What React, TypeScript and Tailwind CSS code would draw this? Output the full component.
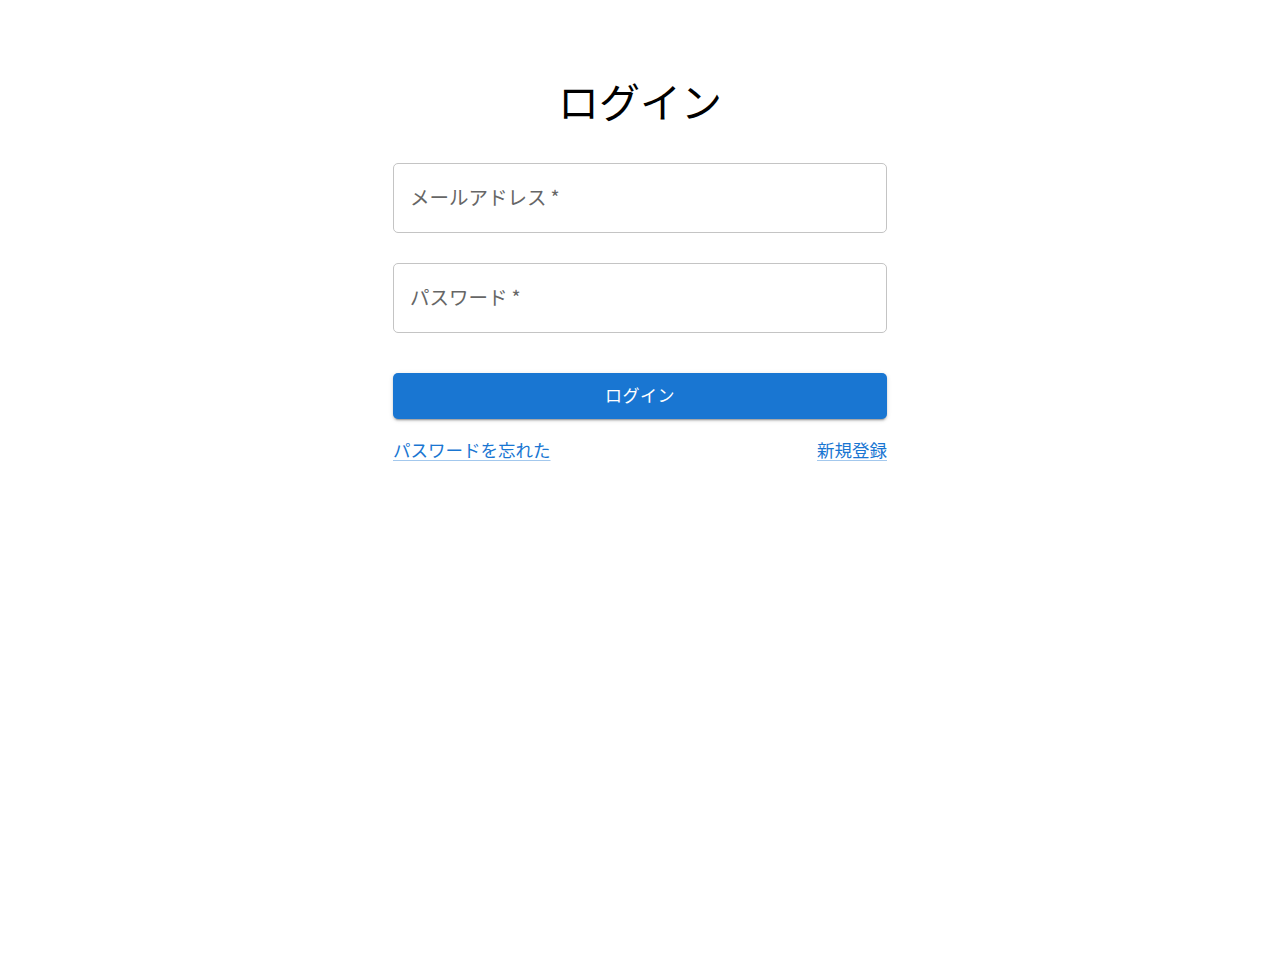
export default function App() {
  return (
    <div
      className="min-h-screen bg-white flex flex-col items-center pt-[75px]"
      style={{ fontFamily: '"Noto Sans CJK JP", "Noto Sans", sans-serif' }}
    >
      <h1 className="text-[41px] leading-[51px] font-normal text-black">ログイン</h1>

      <form className="w-[494px] mt-[37px] flex flex-col" onSubmit={(e) => e.preventDefault()}>
        {/* email */}
        <div className="h-[70px] border border-[#c4c4c4] rounded-[5px] flex items-center px-[16px] pb-[3px]">
          <span className="text-[19.5px] text-[#666666]">メールアドレス{"\u2009*"}</span>
        </div>

        {/* password */}
        <div className="mt-[30px] h-[70px] border border-[#c4c4c4] rounded-[5px] flex items-center px-[16px] pb-[3px]">
          <span className="text-[19.5px] text-[#666666]">パスワード{"\u2009*"}</span>
        </div>

        <button
          type="submit"
          className="mt-[40px] h-[46px] pb-[3px] rounded-[5px] bg-[#1976d2] text-white text-[17px] tracking-[0.5px] shadow-[0_3px_1px_-2px_rgba(0,0,0,0.2),0_2px_2px_0_rgba(0,0,0,0.14),0_1px_5px_0_rgba(0,0,0,0.12)]"
        >
          ログイン
        </button>

        <div className="mt-[19px] flex justify-between text-[17.5px] leading-[24px] text-[#1976d2]">
          <a href="#" className="underline decoration-[rgba(25,118,210,0.4)] underline-offset-[3px]">
            パスワードを忘れた
          </a>
          <a href="#" className="underline decoration-[rgba(25,118,210,0.4)] underline-offset-[3px]">
            新規登録
          </a>
        </div>
      </form>
    </div>
  );
}
